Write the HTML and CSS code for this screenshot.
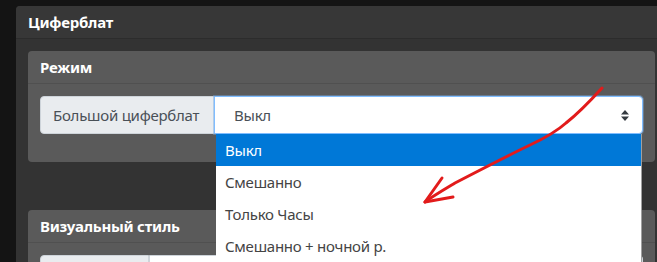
FILE: index.html
```html
<!DOCTYPE html>
<html>
<head>
<meta charset="utf-8">
<title>Циферблат</title>
<link rel="stylesheet" href="styles.css">
</head>
<body>
	<section class="page">
		<div class="panel">
			<div class="panel_head">Циферблат</div>
			<div class="panel_body">

				<div class="card">
					<div class="card_head">Режим</div>
					<div class="card_body">
						<div class="input_group">
							<span class="input_label">Большой циферблат</span>
							<div class="select_wrap">
								<div class="select">
									Выкл
									<svg class="select_arrow" width="8" height="11" viewBox="0 0 8 11"><path d="M4 0 L8 4.5 H0 Z M0 6.5 H8 L4 11 Z" fill="#343a40"/></svg>
								</div>
								<ul class="dropdown">
									<li class="active">Выкл</li>
									<li>Смешанно</li>
									<li>Только Часы</li>
									<li>Смешанно + ночной р.</li>
								</ul>
							</div>
						</div>
					</div>
				</div>

				<div class="card">
					<div class="card_head">Визуальный стиль</div>
					<div class="card_body">
						<div class="input_group">
							<span class="input_label short"></span>
							<div class="select_wrap">
								<div class="select plain"></div>
							</div>
						</div>
					</div>
				</div>

			</div>
		</div>
	</section>

	<!-- стрелка поверх скриншота -->
	<svg class="mark" width="657" height="262" viewBox="0 0 657 262">
		<path d="M602 88 C592 99 580 112 566 123 C556 132 545 138 530 145 C505 157 480 170 455 183 C445 189 433 196 425 202" fill="none" stroke="#e21b1b" stroke-width="3" stroke-linecap="round"/>
		<path d="M442 178 L425 202 L453 197" fill="none" stroke="#e21b1b" stroke-width="3" stroke-linecap="round" stroke-linejoin="round"/>
	</svg>
</body>
</html>
```

FILE: styles.css
```css
body{
	margin: 0;
	background: #141414;
	font-family: "Noto Sans", "Open Sans", sans-serif;
	font-size: 15px;
	letter-spacing: -0.25px;
	color: #495057;
	overflow: hidden;
	height: 262px;
	position: relative;
}

.page{ padding: 6px 0 0 16px; }

.panel{ width: 651px; background: #333; border-radius: 4px;}
.panel_head{ height: 32px; line-height: 32px; padding: 0 12px; background: #373737; border-bottom: 1px solid #2c2c2c; border-radius: 4px 4px 0 0; color: #fff; font-weight: bold;}
.panel_body{ padding: 12px;}

.card{ background: #5a5a5a; border-radius: 4px; margin-bottom: 48px;}
.card_head{ height: 32px; line-height: 32px; padding: 0 12px; border-bottom: 1px solid #505050; color: #fff; font-weight: bold;}
.card_body{ padding: 12px 12px 16px;}

.input_group{ display: flex; height: 38px; margin-bottom: 12px;}
.input_label{ display: flex; align-items: center; width: 149px; padding: 0 11px 0 12px; background: #e9ecef; border: 1px solid #ced4da; border-radius: 4px 0 0 4px; white-space: nowrap;}
.input_label.short{ width: 84px;}
.select_wrap{ flex: 1; position: relative;}
.select{ height: 36px; display: flex; align-items: center; padding-left: 19px; background: #fff; border: 1px solid #80bdff; border-radius: 0 4px 4px 0; box-shadow: 0 0 0 1px rgba(128,189,255,.35); color: #495057;}
.select.plain{ border-color: #ced4da; box-shadow: none;}
.select_arrow{ position: absolute; right: 14px; top: 14px;}

.dropdown{ position: absolute; top: 38px; left: 2px; right: 1px; margin: 0; padding: 0; list-style: none; background: #fff; border-right: 1px solid #a0a0a0; z-index: 2;}
.dropdown li{ height: 32px; line-height: 32px; padding-left: 9px; color: #444;}
.dropdown li.active{ background: #0078d7; color: #fff;}

.mark{ position: absolute; left: 0; top: 0; z-index: 5; pointer-events: none;}
```
